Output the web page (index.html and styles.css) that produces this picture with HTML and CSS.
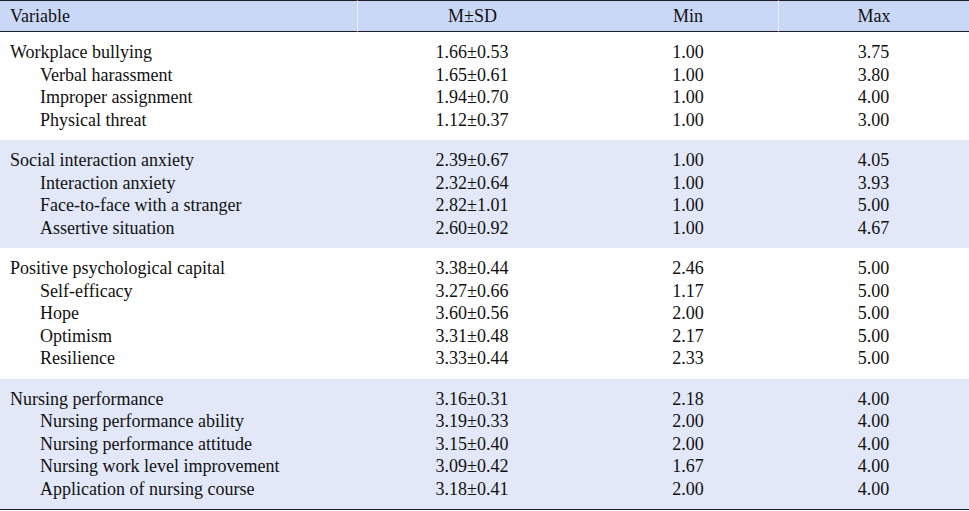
FILE: index.html
```html
<!DOCTYPE html>
<html lang="en">
<head>
<meta charset="utf-8">
<title>Descriptive statistics</title>
<link rel="stylesheet" href="styles.css">
</head>
<body>
<table class="stats">
  <colgroup>
    <col class="col-var">
    <col class="col-msd">
    <col class="col-min">
    <col class="col-max">
  </colgroup>
  <thead>
    <tr>
      <th class="c-var">Variable</th>
      <th class="c-msd sep">M±SD</th>
      <th class="c-min">Min</th>
      <th class="c-max sep">Max</th>
    </tr>
  </thead>
  <tbody class="band">
    <tr><td class="c-var">Workplace bullying</td><td class="c-msd">1.66±0.53</td><td class="c-min">1.00</td><td class="c-max">3.75</td></tr>
    <tr><td class="c-var sub">Verbal harassment</td><td class="c-msd">1.65±0.61</td><td class="c-min">1.00</td><td class="c-max">3.80</td></tr>
    <tr><td class="c-var sub">Improper assignment</td><td class="c-msd">1.94±0.70</td><td class="c-min">1.00</td><td class="c-max">4.00</td></tr>
    <tr><td class="c-var sub">Physical threat</td><td class="c-msd">1.12±0.37</td><td class="c-min">1.00</td><td class="c-max">3.00</td></tr>
  </tbody>
  <tbody class="band shaded">
    <tr><td class="c-var">Social interaction anxiety</td><td class="c-msd">2.39±0.67</td><td class="c-min">1.00</td><td class="c-max">4.05</td></tr>
    <tr><td class="c-var sub">Interaction anxiety</td><td class="c-msd">2.32±0.64</td><td class="c-min">1.00</td><td class="c-max">3.93</td></tr>
    <tr><td class="c-var sub">Face-to-face with a stranger</td><td class="c-msd">2.82±1.01</td><td class="c-min">1.00</td><td class="c-max">5.00</td></tr>
    <tr><td class="c-var sub">Assertive situation</td><td class="c-msd">2.60±0.92</td><td class="c-min">1.00</td><td class="c-max">4.67</td></tr>
  </tbody>
  <tbody class="band">
    <tr><td class="c-var">Positive psychological capital</td><td class="c-msd">3.38±0.44</td><td class="c-min">2.46</td><td class="c-max">5.00</td></tr>
    <tr><td class="c-var sub">Self-efficacy</td><td class="c-msd">3.27±0.66</td><td class="c-min">1.17</td><td class="c-max">5.00</td></tr>
    <tr><td class="c-var sub">Hope</td><td class="c-msd">3.60±0.56</td><td class="c-min">2.00</td><td class="c-max">5.00</td></tr>
    <tr><td class="c-var sub">Optimism</td><td class="c-msd">3.31±0.48</td><td class="c-min">2.17</td><td class="c-max">5.00</td></tr>
    <tr><td class="c-var sub">Resilience</td><td class="c-msd">3.33±0.44</td><td class="c-min">2.33</td><td class="c-max">5.00</td></tr>
  </tbody>
  <tbody class="band shaded last">
    <tr><td class="c-var">Nursing performance</td><td class="c-msd">3.16±0.31</td><td class="c-min">2.18</td><td class="c-max">4.00</td></tr>
    <tr><td class="c-var sub">Nursing performance ability</td><td class="c-msd">3.19±0.33</td><td class="c-min">2.00</td><td class="c-max">4.00</td></tr>
    <tr><td class="c-var sub">Nursing performance attitude</td><td class="c-msd">3.15±0.40</td><td class="c-min">2.00</td><td class="c-max">4.00</td></tr>
    <tr><td class="c-var sub">Nursing work level improvement</td><td class="c-msd">3.09±0.42</td><td class="c-min">1.67</td><td class="c-max">4.00</td></tr>
    <tr><td class="c-var sub">Application of nursing course</td><td class="c-msd">3.18±0.41</td><td class="c-min">2.00</td><td class="c-max">4.00</td></tr>
  </tbody>
</table>
</body>
</html>
```
FILE: styles.css
```css
html, body {
  margin: 0;
  padding: 0;
  background: #ffffff;
}

body {
  font-family: "Liberation Serif", "Times New Roman", serif;
  font-size: 18px;
  color: #111111;
}

.stats {
  width: 969px;
  table-layout: fixed;
  border-collapse: separate;
  border-spacing: 0;
}

.col-var { width: 357px; }
.col-msd { width: 230px; }
.col-min { width: 191px; }
.col-max { width: 191px; }

.stats th,
.stats td {
  padding: 0;
  font-weight: normal;
  white-space: nowrap;
}

.stats th {
  background: #cad8f7;
  height: 30px;
  line-height: 30px;
  border-top: 1px solid #1e1e26;
  border-bottom: 1px solid #1e1e26;
  text-align: center;
}

.stats th.sep {
  border-left: 1px solid #e6ecfb;
}

.stats td {
  line-height: 22.5px;
  text-align: center;
}

.stats .c-var {
  text-align: left;
  padding-left: 10px;
}

.stats .c-var.sub {
  padding-left: 40px;
}

.stats .c-min {
  padding-left: 11px;
}

.band tr:first-child td {
  padding-top: 9px;
}

.band tr:last-child td {
  padding-bottom: 9px;
}

.shaded td {
  background: #e2e8f8;
}

.last tr:last-child td {
  border-bottom: 1px solid #1e1e26;
}
```
